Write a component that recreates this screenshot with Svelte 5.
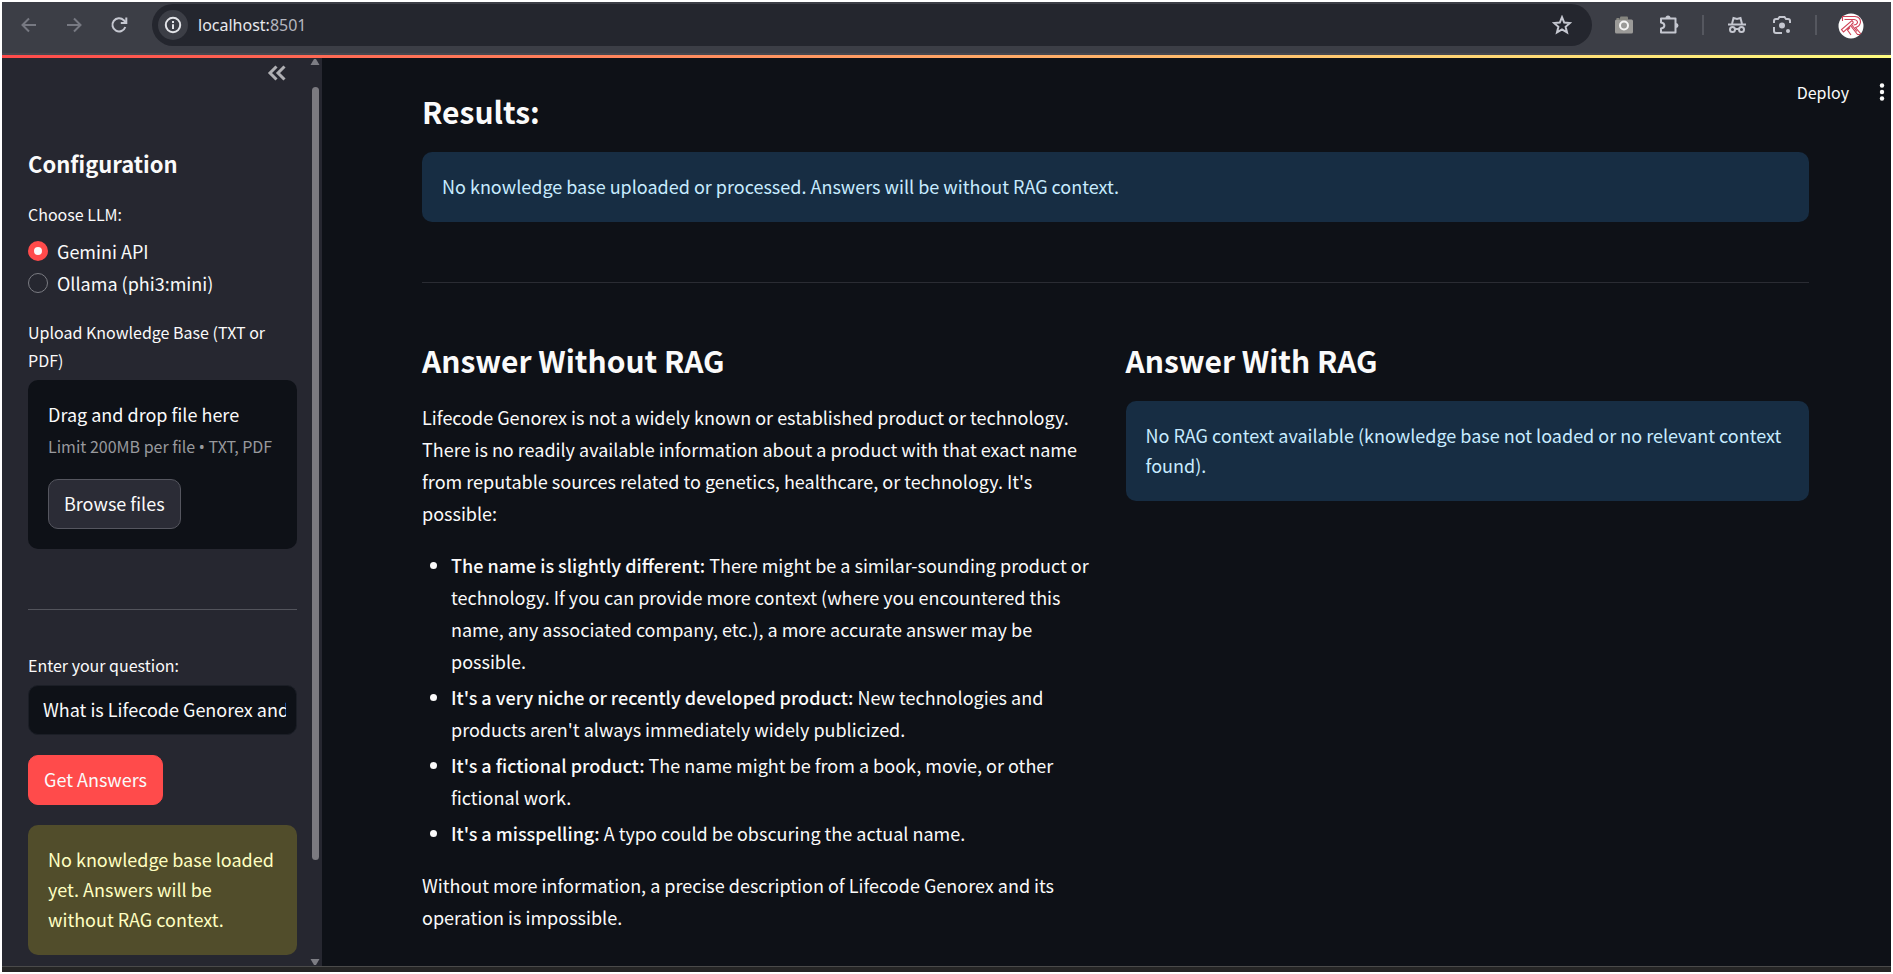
<script>
  let llm = $state('gemini');
  let question = $state('What is Lifecode Genorex and how does it work?');

  const reasons = [
    {
      title: 'The name is slightly different:',
      text: 'There might be a similar-sounding product or technology. If you can provide more context (where you encountered this name, any associated company, etc.), a more accurate answer may be possible.'
    },
    {
      title: "It's a very niche or recently developed product:",
      text: "New technologies and products aren't always immediately widely publicized."
    },
    {
      title: "It's a fictional product:",
      text: 'The name might be from a book, movie, or other fictional work.'
    },
    {
      title: "It's a misspelling:",
      text: 'A typo could be obscuring the actual name.'
    }
  ];
</script>

<div class="window">
  <header class="browser">
    <nav class="nav">
      <button class="icon dim" aria-label="Back">
        <svg width="20" height="20" viewBox="0 0 20 20"><path d="M17 10H4M10 3.500L3.500 10L10 16.500" /></svg>
      </button>
      <button class="icon dim" aria-label="Forward">
        <svg width="20" height="20" viewBox="0 0 20 20"><path d="M3 10H16M10 3.500L16.500 10L10 16.500" /></svg>
      </button>
      <button class="icon" aria-label="Reload">
        <svg width="20" height="20" viewBox="0 0 20 20"><path d="M16.300 12A6.600 6.600 0 1 1 14.800 5.300L17 7.500" /><path d="M17.300 2.500V8H11.800" /></svg>
      </button>
    </nav>
    <div class="address">
      <button class="info-icon" aria-label="Site information">
        <svg width="20" height="20" viewBox="0 0 20 20"><circle cx="10" cy="10" r="7.200" /><path d="M10 9.200V14M10 6V8" /></svg>
      </button>
      <span class="url">localhost:<span class="port">8501</span></span>
      <button class="icon star" aria-label="Bookmark">
        <svg width="20" height="20" viewBox="0 0 20 20"><path d="M10 2.200L12.200 7.600L18 8L13.600 11.800L15 17.400L10 14.400L5 17.400L6.400 11.800L2 8L7.800 7.600Z" /></svg>
      </button>
    </div>
    <div class="extensions">
      <button class="icon" aria-label="Screenshot">
        <svg width="20" height="20" viewBox="0 0 20 20">
          <rect x="1" y="4.500" width="18" height="14" rx="1.500" fill="#9b9a98" stroke="none" />
          <path d="M6 5V2.500Q6 1.500 7 1.500H13Q14 1.500 14 2.500V5Z" fill="#85857f" stroke="none" />
          <rect x="2.500" y="3" width="3" height="2" fill="#85857f" stroke="none" />
          <circle cx="10" cy="10.500" r="4" fill="#9a9a98" stroke="#f4f4f4" />
        </svg>
      </button>
      <button class="icon" aria-label="Extensions">
        <svg width="22" height="22" viewBox="0 0 22 22">
          <path d="M3 4.500H17.500V18.500H3V14.500C7.500 14 7.500 9 3 8.500Z" stroke-linejoin="round" />
          <path d="M7.500 4A2.500 2.500 0 0 1 12.500 4ZM18 9A2.500 2.500 0 0 1 18 14Z" fill="currentColor" stroke="none" />
        </svg>
      </button>
      <span class="divider"></span>
      <button class="icon" aria-label="Incognito">
        <svg width="20" height="20" viewBox="0 0 20 20">
          <path d="M1 9.500H19" />
          <path d="M5 9L6.500 3L10 4L13.500 3L15 9" />
          <circle cx="5.500" cy="14.500" r="2.500" /><circle cx="14.500" cy="14.500" r="2.500" /><path d="M8 14H12" />
        </svg>
      </button>
      <button class="icon" aria-label="Search with lens">
        <svg width="20" height="20" viewBox="0 0 20 20">
          <path d="M2 8V6Q2 4 4 4H6L7.500 2H12.500L14 4H16Q18 4 18 6V8M2 12V16Q2 18 4 18H10" />
          <circle cx="10" cy="10.500" r="3" fill="currentColor" stroke="none" />
          <circle cx="16" cy="16" r="2" fill="currentColor" stroke="none" />
        </svg>
      </button>
      <span class="divider"></span>
      <button class="icon" aria-label="Profile">
        <svg width="26" height="26" viewBox="0 0 26 26">
          <circle cx="13" cy="13" r="12.500" fill="#fff" stroke="none" />
          <g stroke="#cf4257" stroke-width="1.100">
            <path d="M4.500 8V3.500H17Q22.500 4 22.500 9Q22 13.500 17.500 14.500L23 21" />
            <path d="M6.500 6.500H16Q19.500 7 19.500 9.500Q19 12 15.500 12" />
            <path d="M15.500 9.500L14 7.500L3.500 16.500L5.500 19L12.500 12.500L19.500 21.500H22M15.500 9.500L13.500 11.500L19 18.500M12 14.500L9.500 17L13 22" />
          </g>
        </svg>
      </button>
    </div>
  </header>

  <div class="rainbow"></div>

  <div class="app">
    <aside class="sidebar">
      <div class="panel">
        <div class="panel-head">
          <button class="icon collapse" aria-label="Collapse sidebar">
            <svg width="20" height="20" viewBox="0 0 20 20"><path d="M9.500 3.500L3 10L9.500 16.500M17.500 3.500L11 10L17.500 16.500" /></svg>
          </button>
        </div>

        <h2>Configuration</h2>

        <fieldset>
          <legend>Choose LLM:</legend>
          <label class="option"><input type="radio" name="llm" value="gemini" bind:group={llm} />Gemini API</label>
          <label class="option"><input type="radio" name="llm" value="ollama" bind:group={llm} />Ollama (phi3:mini)</label>
        </fieldset>

        <div class="field upload">
          <label for="browse">Upload Knowledge Base (TXT or PDF)</label>
          <div class="dropzone">
            <span class="drop-title">Drag and drop file here</span>
            <small>Limit 200MB per file <span class="dot">•</span> TXT, PDF</small>
            <button id="browse" class="btn">Browse files</button>
          </div>
        </div>

        <hr />

        <div class="field">
          <label for="question">Enter your question:</label>
          <div class="textbox"><input id="question" type="text" bind:value={question} /></div>
        </div>

        <button class="btn primary">Get Answers</button>

        <div class="alert warning">No knowledge base loaded yet. Answers will be without RAG context.</div>
      </div>

      <div class="scrollbar" aria-hidden="true">
        <svg width="10" height="8" viewBox="0 0 10 8"><path d="M0.500 7L4 1H6L9.500 7Z" /></svg>
        <div class="track"><div class="thumb"></div></div>
        <svg width="10" height="8" viewBox="0 0 10 8"><path d="M0.500 1L4 7H6L9.500 1Z" /></svg>
      </div>
    </aside>

    <main>
      <div class="toolbar">
        <button class="deploy">Deploy</button>
        <button class="kebab" aria-label="Main menu">
          <svg width="6" height="20" viewBox="0 0 6 20"><circle cx="3" cy="3.500" r="2.200" /><circle cx="3" cy="10" r="2.200" /><circle cx="3" cy="16.500" r="2.200" /></svg>
        </button>
      </div>

      <h1>Results:</h1>
      <div class="alert info">No knowledge base uploaded or processed. Answers will be without RAG context.</div>
      <hr />

      <div class="columns">
        <section>
          <h1>Answer Without RAG</h1>
          <p>Lifecode Genorex is not a widely known or established product or technology. There is no readily available information about a product with that exact name from reputable sources related to genetics, healthcare, or technology. It's possible:</p>
          <ul>
            {#each reasons as reason}
              <li><strong>{reason.title}</strong> {reason.text}</li>
            {/each}
          </ul>
          <p>Without more information, a precise description of Lifecode Genorex and its operation is impossible.</p>
        </section>
        <section>
          <h1>Answer With RAG</h1>
          <div class="alert info">No RAG context available (knowledge base not loaded or no relevant context found).</div>
        </section>
      </div>
    </main>
  </div>
  <footer></footer>
</div>

<style>
  :global(body) {
    background: #fff;
  }

  .window, .window :global(*) {
    box-sizing: border-box;
  }

  .window {
    display: flex;
    flex-direction: column;
    height: 100vh;
    border: 2px solid #fff;
    background: #0e1117;
    color: #fafafa;
    font-family: "Noto Sans CJK SC", "Noto Sans", sans-serif;
    font-size: 18px;
    line-height: 32px;
    overflow: hidden;
  }

  button, input {
    font: inherit;
    color: inherit;
  }

  button {
    cursor: pointer;
  }

  svg {
    display: block;
    fill: none;
    stroke: currentColor;
    stroke-width: 2;
  }

  /* Browser chrome */
  .browser {
    display: flex;
    align-items: center;
    flex: none;
    height: 53px;
    padding: 0 29px 6px 15px;
    background: #3c3e46;
    border-bottom: 2px solid #46474f;
    color: #c5c7d0;
  }

  .nav {
    display: flex;
    gap: 21px;
    margin-right: 21px;
  }

  .icon {
    display: grid;
    place-items: center;
    width: 24px;
    height: 24px;
    padding: 0;
    border: 0;
    background: none;
  }

  .dim {
    color: #777982;
  }

  .address {
    display: flex;
    align-items: center;
    flex: 1;
    height: 42px;
    padding: 0 18px 0 6px;
    border-radius: 21px;
    background: #24262e;
  }

  .info-icon {
    display: grid;
    place-items: center;
    width: 30px;
    height: 30px;
    padding: 0;
    border: 0;
    border-radius: 50%;
    background: #3c3e46;
    color: #e3e4e8;
  }

  .url {
    flex: 1;
    margin-left: 10px;
    color: #e8e9ed;
    font-family: "Noto Sans", "Open Sans", sans-serif;
    font-size: 16px;
  }

  .port {
    color: #b4b6bf;
  }

  .extensions {
    display: flex;
    align-items: center;
    gap: 21px;
    margin-left: 20px;
  }

  .divider {
    width: 2px;
    height: 20px;
    background: #55575f;
  }

  .rainbow {
    flex: none;
    height: 3px;
    background: linear-gradient(90deg, #ff4b4b, #fffd80);
  }

  /* App shell */
  .app {
    display: flex;
    flex: 1;
    min-height: 0;
  }

  .sidebar {
    display: flex;
    flex: none;
    width: 320px;
    background: #262730;
  }

  .panel {
    flex: 1;
    min-width: 0;
    padding-left: 26px;
    overflow: hidden;
  }

  .panel-head {
    display: flex;
    justify-content: flex-end;
    padding: 3px 8px 0 0;
  }

  .collapse {
    color: #b0b0b4;
  }

  .collapse svg {
    stroke-width: 3;
  }

  .scrollbar {
    display: flex;
    flex-direction: column;
    align-items: center;
    flex: none;
    width: 10px;
    margin: 0 2px 0 13px;
  }

  .scrollbar svg {
    fill: #7d7d84;
    stroke: none;
  }

  .track {
    flex: 1;
    padding: 21px 0 12px;
  }

  .thumb {
    width: 7px;
    height: 90%;
    border-radius: 4px;
    background: #7b7a80;
  }

  h2 {
    margin: 63px 0 22px;
    font-size: 22px;
    line-height: 30px;
    font-weight: 700;
  }

  fieldset {
    margin: 0;
    padding: 0;
    border: 0;
  }

  legend, .field label {
    display: block;
    padding: 0;
    font-size: 16px;
    line-height: 28px;
  }

  legend {
    margin-bottom: 7px;
  }

  .option {
    display: flex;
    align-items: center;
    gap: 9px;
  }

  .option input {
    appearance: none;
    width: 20px;
    height: 20px;
    margin: 0;
    border: 1px solid #7a7b82;
    border-radius: 50%;
  }

  .option input:checked {
    border: 6px solid #ff4b4b;
    background: #fafafa;
  }

  .upload {
    margin-top: 19px;
  }

  .dropzone {
    display: flex;
    flex-direction: column;
    align-items: flex-start;
    margin-top: 6px;
    padding: 18px 20px 20px;
    border-radius: 10px;
    background: #0e1117;
  }

  small {
    margin-bottom: 16px;
    color: #98999d;
    font-size: 16px;
    white-space: nowrap;
  }

  .dot {
    font-family: "Noto Sans", sans-serif;
  }

  .btn {
    height: 50px;
    padding: 0 15px 2px;
    border: 1px solid #55565f;
    border-radius: 10px;
    background: #2b2c36;
    line-height: 32px;
    white-space: nowrap;
  }

  .primary {
    display: block;
    margin: 20px 0;
    border-color: #ff4b4b;
    background: #ff4b4b;
  }

  hr {
    margin: 60px 0;
    border: 0;
    border-top: 1px solid #53545c;
  }

  .panel hr {
    margin: 60px 0 41px;
  }

  .textbox {
    margin-top: 6px;
    padding: 0 10px 0 14px;
    border: 1px solid #1b1e26;
    border-radius: 10px;
    background: #0e1117;
  }

  .textbox input {
    display: block;
    width: 100%;
    height: 48px;
    padding: 0 0 2px;
    border: 0;
    outline: 0;
    background: none;
  }

  .alert {
    padding: 19px 20px 21px;
    border-radius: 10px;
    line-height: 30px;
  }

  .warning {
    background: #514d2b;
    color: #ffffc2;
  }

  .info {
    background: #172d43;
    color: #c7ebff;
  }

  /* Main area */
  main {
    position: relative;
    flex: 1;
    min-width: 0;
    padding: 32px 82px 0 100px;
    overflow: hidden;
  }

  .toolbar {
    position: absolute;
    top: 18px;
    right: 6px;
    display: flex;
    align-items: center;
    gap: 30px;
  }

  .deploy, .kebab {
    padding: 0;
    border: 0;
    background: none;
    font-size: 16px;
  }

  .kebab svg {
    fill: currentColor;
    stroke: none;
  }

  h1 {
    margin: 0;
    padding-bottom: 20px;
    font-size: 30px;
    line-height: 42px;
    font-weight: 700;
  }

  main hr {
    border-color: #2a2c33;
    margin: 60px 0 56px;
  }

  .columns {
    display: grid;
    grid-template-columns: 1fr 1fr;
    gap: 20px;
  }

  p {
    margin: 0 0 20px;
  }

  ul {
    display: grid;
    gap: 4px;
    margin: 0 0 20px;
    padding-left: 29px;
  }

  strong {
    font-weight: 500;
  }

  footer {
    flex: none;
    height: 6px;
    border-top: 1px solid #4a4a4a;
    background: #252525;
  }
</style>
